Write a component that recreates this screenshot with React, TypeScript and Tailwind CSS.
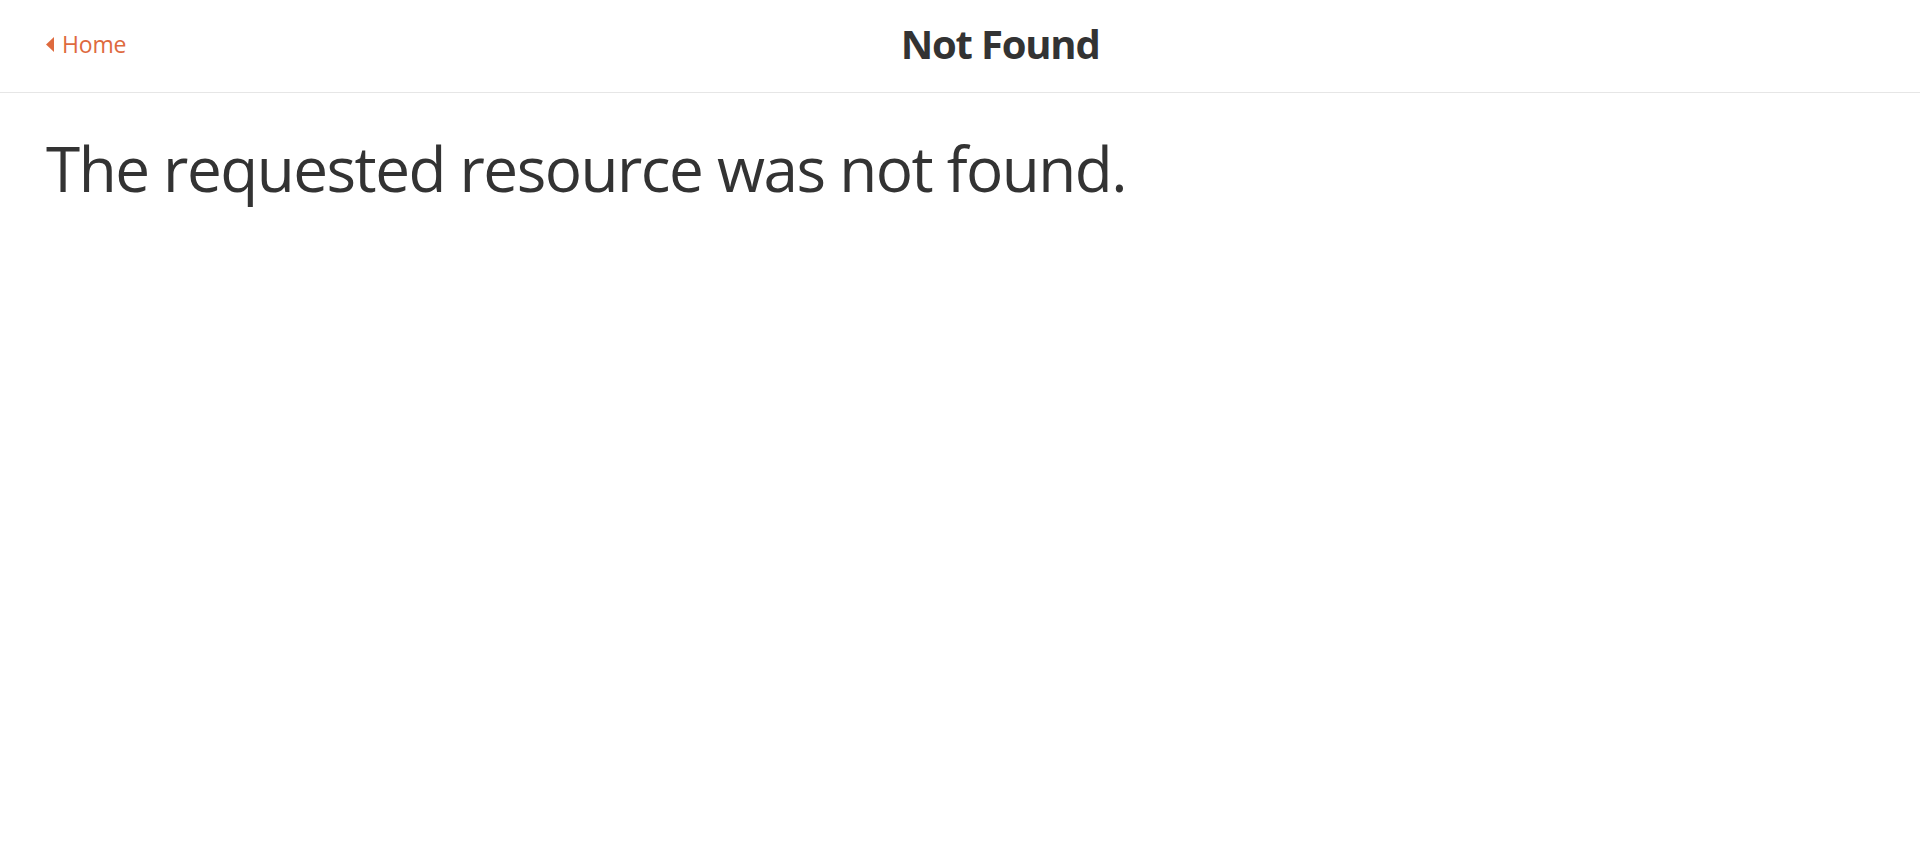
export default function App() {
  return (
    <div className="min-h-screen bg-white font-['Open_Sans',sans-serif] text-[#333]">
      <header className="flex h-[93px] items-center border-b border-[#e6e6e6] px-[46px] pb-[4px]">
        <a href="#" className="flex items-center gap-[8px] text-[23px] leading-none text-[#de6a3e]">
          <svg width="8" height="15" viewBox="0 0 8 15" className="fill-current">
            <path d="M8 0 L0 7.5 L8 15 Z" />
          </svg>
          <span className="tracking-[-0.2px]">Home</span>
        </a>
        <h1 className="flex-1 text-center text-[40px] font-bold leading-none tracking-[-1.2px]">Not Found</h1>
      </header>
      <main className="px-[46px] pt-[38px]">
        <p className="text-[62px] leading-[74px] tracking-[-1.5px]">The requested resource was not found.</p>
      </main>
    </div>
  )
}
